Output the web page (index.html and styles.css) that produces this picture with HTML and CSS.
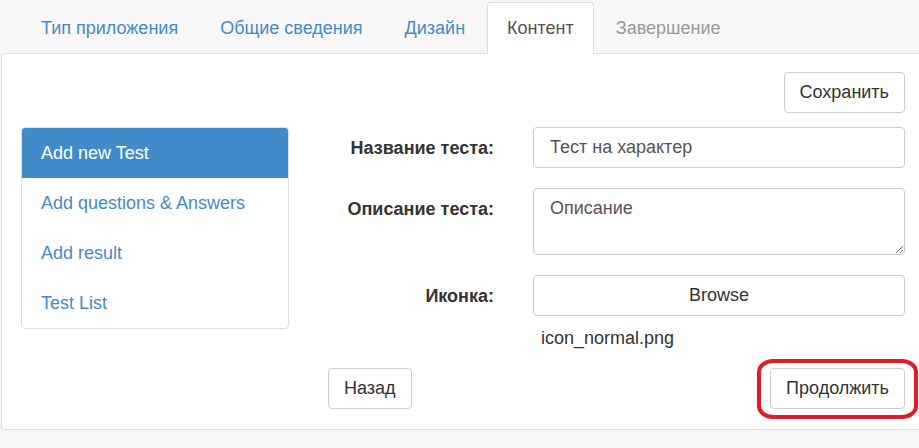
FILE: index.html
```html
<!DOCTYPE html>
<html lang="ru">
<head>
<meta charset="utf-8">
<title>Контент</title>
<link rel="stylesheet" href="styles.css">
</head>
<body>
<div class="wrap">
  <ul class="tabs">
    <li><a class="tab">Тип приложения</a></li>
    <li><a class="tab">Общие сведения</a></li>
    <li><a class="tab">Дизайн</a></li>
    <li><a class="tab active">Контент</a></li>
    <li><a class="tab disabled">Завершение</a></li>
  </ul>
  <div class="panel">
    <div class="save-row">
      <button class="btn">Сохранить</button>
    </div>
    <div class="main">
      <div class="list">
        <a class="item active">Add new Test</a>
        <a class="item">Add questions &amp; Answers</a>
        <a class="item">Add result</a>
        <a class="item">Test List</a>
      </div>
      <div class="content">
        <div class="form">
          <label class="label">Название теста:</label>
          <input class="control" type="text" value="Тест на характер">
          <label class="label">Описание теста:</label>
          <textarea class="control area">Описание</textarea>
          <label class="label">Иконка:</label>
          <div class="field">
            <button class="control browse">Browse</button>
            <div class="filename">icon_normal.png</div>
          </div>
        </div>
        <div class="nav-row">
          <button class="btn">Назад</button>
          <div class="mark-wrap">
            <button class="btn">Продолжить</button>
            <span class="mark"></span>
          </div>
        </div>
      </div>
    </div>
  </div>
</div>
</body>
</html>
```
FILE: styles.css
```css
html, body {
  margin: 0;
  padding: 0;
  background: #f7f7f7;
  font-family: "Liberation Sans", Arial, sans-serif;
  font-size: 18px;
  color: #333;
  overflow: hidden;
}
.wrap {
  padding: 2px 0 0 1px;
}
.tabs {
  display: flex;
  list-style: none;
  margin: 0;
  padding: 0 0 0 20px;
  position: relative;
  z-index: 1;
}
.tabs li {
  margin-right: 2px;
}
.tab {
  display: block;
  padding: 14px 19px;
  line-height: 22px;
  border: 1px solid transparent;
  border-radius: 4px 4px 0 0;
  margin-bottom: -1px;
  color: #428bca;
}
.tab.active {
  background: #fff;
  border-color: #ddd #ddd transparent;
  color: #555;
}
.tab.disabled {
  color: #999;
}
.panel {
  background: #fff;
  border: 1px solid #ddd;
  border-right: none;
  border-radius: 4px 0 0 4px;
  padding: 18px 14px 20px 19px;
}
.save-row {
  display: flex;
  justify-content: flex-end;
  margin-bottom: 14px;
}
.btn {
  font: inherit;
  color: #333;
  background: #fff;
  border: 1px solid #ccc;
  border-radius: 4px;
  padding: 9px 15px;
  line-height: 21px;
  margin: 0;
}
.main {
  display: flex;
  align-items: flex-start;
}
.list {
  width: 268px;
  box-sizing: border-box;
  border: 1px solid #ddd;
  border-radius: 4px;
  overflow: hidden;
  display: flex;
  flex-direction: column;
}
.item {
  display: block;
  padding: 14px 19px;
  line-height: 22px;
  color: #428bca;
}
.item.active {
  background: #428bca;
  color: #fff;
}
.content {
  flex: 1;
  margin-left: 39px;
}
.form {
  display: grid;
  grid-template-columns: 166px 1fr;
  column-gap: 39px;
  row-gap: 20px;
  align-items: start;
}
.label {
  font-weight: bold;
  text-align: right;
  padding-top: 10px;
  line-height: 22px;
  white-space: nowrap;
}
.control {
  font: inherit;
  color: #555;
  background: #fff;
  border: 1px solid #ccc;
  border-radius: 4px;
  padding: 9px 16px;
  line-height: 21px;
  height: 41px;
  box-sizing: border-box;
  width: 100%;
  margin: 0;
  display: block;
}
.area {
  height: 67px;
  resize: vertical;
}
.browse {
  color: #333;
  text-align: center;
}
.filename {
  padding-left: 8px;
  margin-top: 11px;
  line-height: 22px;
  color: #333;
}
.nav-row {
  display: flex;
  justify-content: space-between;
  margin-top: 19px;
}
.mark-wrap {
  position: relative;
}
.mark {
  position: absolute;
  left: -13px;
  right: -13px;
  top: -9px;
  bottom: -10px;
  border: 4px solid #e31b23;
  border-radius: 16px / 13px;
}
```
